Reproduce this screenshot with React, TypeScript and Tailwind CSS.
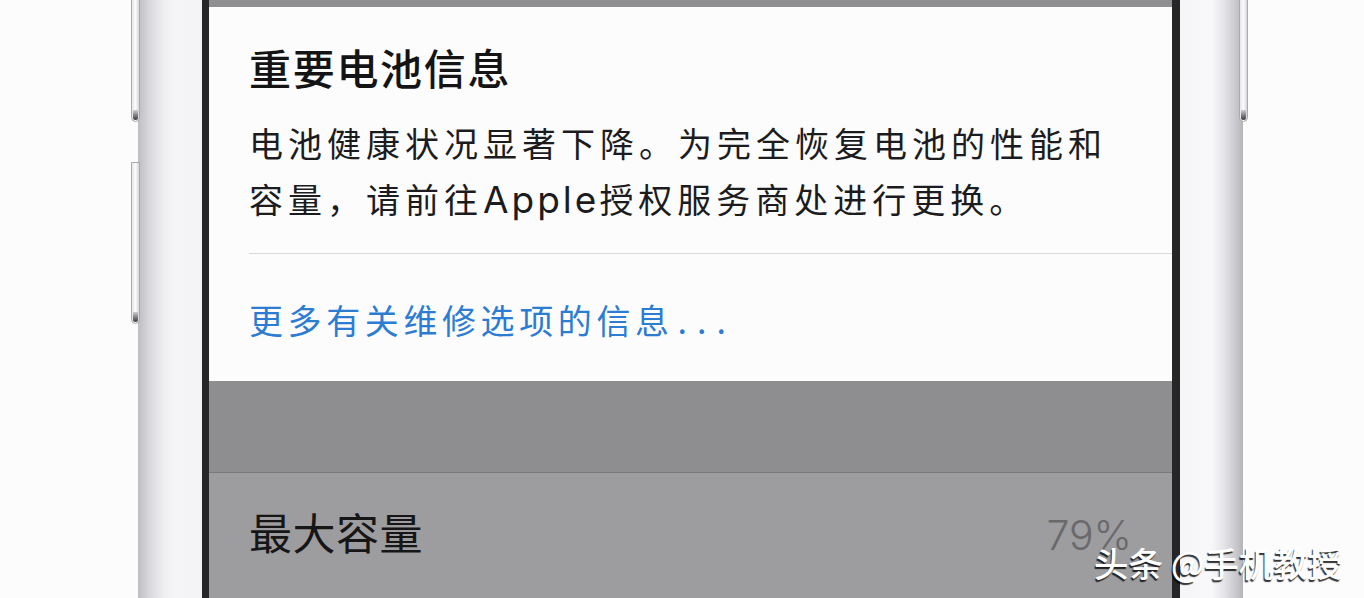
import React from "react";

const cjk = '"Noto Sans CJK SC", "Noto Sans", sans-serif';
const latin = '"Inter", "Noto Sans CJK SC", sans-serif';

function SideButton({ className }: { className: string }) {
  return (
    <div
      className={`absolute w-[9px] rounded-b-[5px] border border-[#a9a9ae] bg-[linear-gradient(to_right,#e6e6ea,#fbfbfc_50%,#d6d6da)] ${className}`}
    >
      <div className="absolute bottom-[1px] left-[1px] h-[10px] w-[5px] rounded-b-[3px] bg-[linear-gradient(to_bottom,#cfcfd3,#3a3a3e)]" />
    </div>
  );
}

export default function App() {
  return (
    <div
      className="relative flex h-[598px] w-[1364px] overflow-hidden bg-[#fcfcfd]"
      style={{ fontFamily: cjk }}
    >
      {/* left edge of the handset body */}
      <div className="ml-[138px] h-full w-[64px] bg-[linear-gradient(to_right,#bdbdc2,#d9d9dd_18%,#eeeef1_40%,#f6f6f8_60%,#f3f3f5)]" />
      {/* bezel */}
      <div className="h-full w-[7px] bg-[#262627]" />

      {/* screen */}
      <div className="flex h-full w-[963px] flex-col">
        <div className="h-[7px] bg-[#8f8e91]" />

        <div className="flex h-[374px] flex-col bg-[#fcfcfd] pl-[40px]">
          <div className="mt-[37px] text-[42px] leading-[46px] font-medium tracking-[1.7px] text-[#141414]">
            重要电池信息
          </div>
          <div className="mt-[25px] text-[34px] leading-[56px] tracking-[5px] text-[#1c1c1e]">
            <div>电池健康状况显著下降。为完全恢复电池的性能和</div>
            <div>
              容量，请前往
              <span className="text-[37px] tracking-[3px]" style={{ fontFamily: latin }}>
                Apple
              </span>
              授权服务商处进行更换。
            </div>
          </div>
          <div className="mt-[25px] h-px bg-[#d9d9dd]" />
          <div className="mt-[38px] text-[34px] leading-[56px] tracking-[4.6px] text-[#2c7dd2]">
            更多有关维修选项的信息<span className="ml-[4px] tracking-[10px]">...</span>
          </div>
        </div>

        <div className="h-[91px] bg-[#8e8d90]" />
        <div className="h-px bg-[#7a797c]" />

        <div className="flex flex-1 items-center justify-between bg-[#9d9c9f] pl-[40px] pr-[40px]">
          <div className="-mt-[10px] text-[43px] leading-[46px] tracking-[0.5px] text-[#161616]">
            最大容量
          </div>
          <div
            className="-mt-[2px] text-[41px] leading-[44px] font-light text-[#69696b]"
            style={{ fontFamily: '"Inter", "Noto Sans", sans-serif' }}
          >
            79%
          </div>
        </div>
      </div>

      {/* bezel */}
      <div className="h-full w-[8px] bg-[#262627]" />
      {/* right edge of the handset body */}
      <div className="h-full w-[63px] bg-[linear-gradient(to_right,#f6f6f8,#f8f8fa_50%,#e4e4e8_70%,#c4c4c8_92%,#b3b3b8)]" />

      {/* hardware buttons */}
      <SideButton className="left-[131px] top-[-6px] h-[128px]" />
      <SideButton className="left-[131px] top-[162px] h-[162px]" />
      <SideButton className="left-[1239px] top-[-6px] h-[128px]" />

      {/* watermark */}
      <div className="absolute left-[1094px] top-[539px] text-[34.5px] leading-[46px] font-medium whitespace-nowrap text-white [text-shadow:-1px_2px_1px_rgba(0,0,0,0.8)]">
        头条 @手机教授
      </div>
    </div>
  );
}
